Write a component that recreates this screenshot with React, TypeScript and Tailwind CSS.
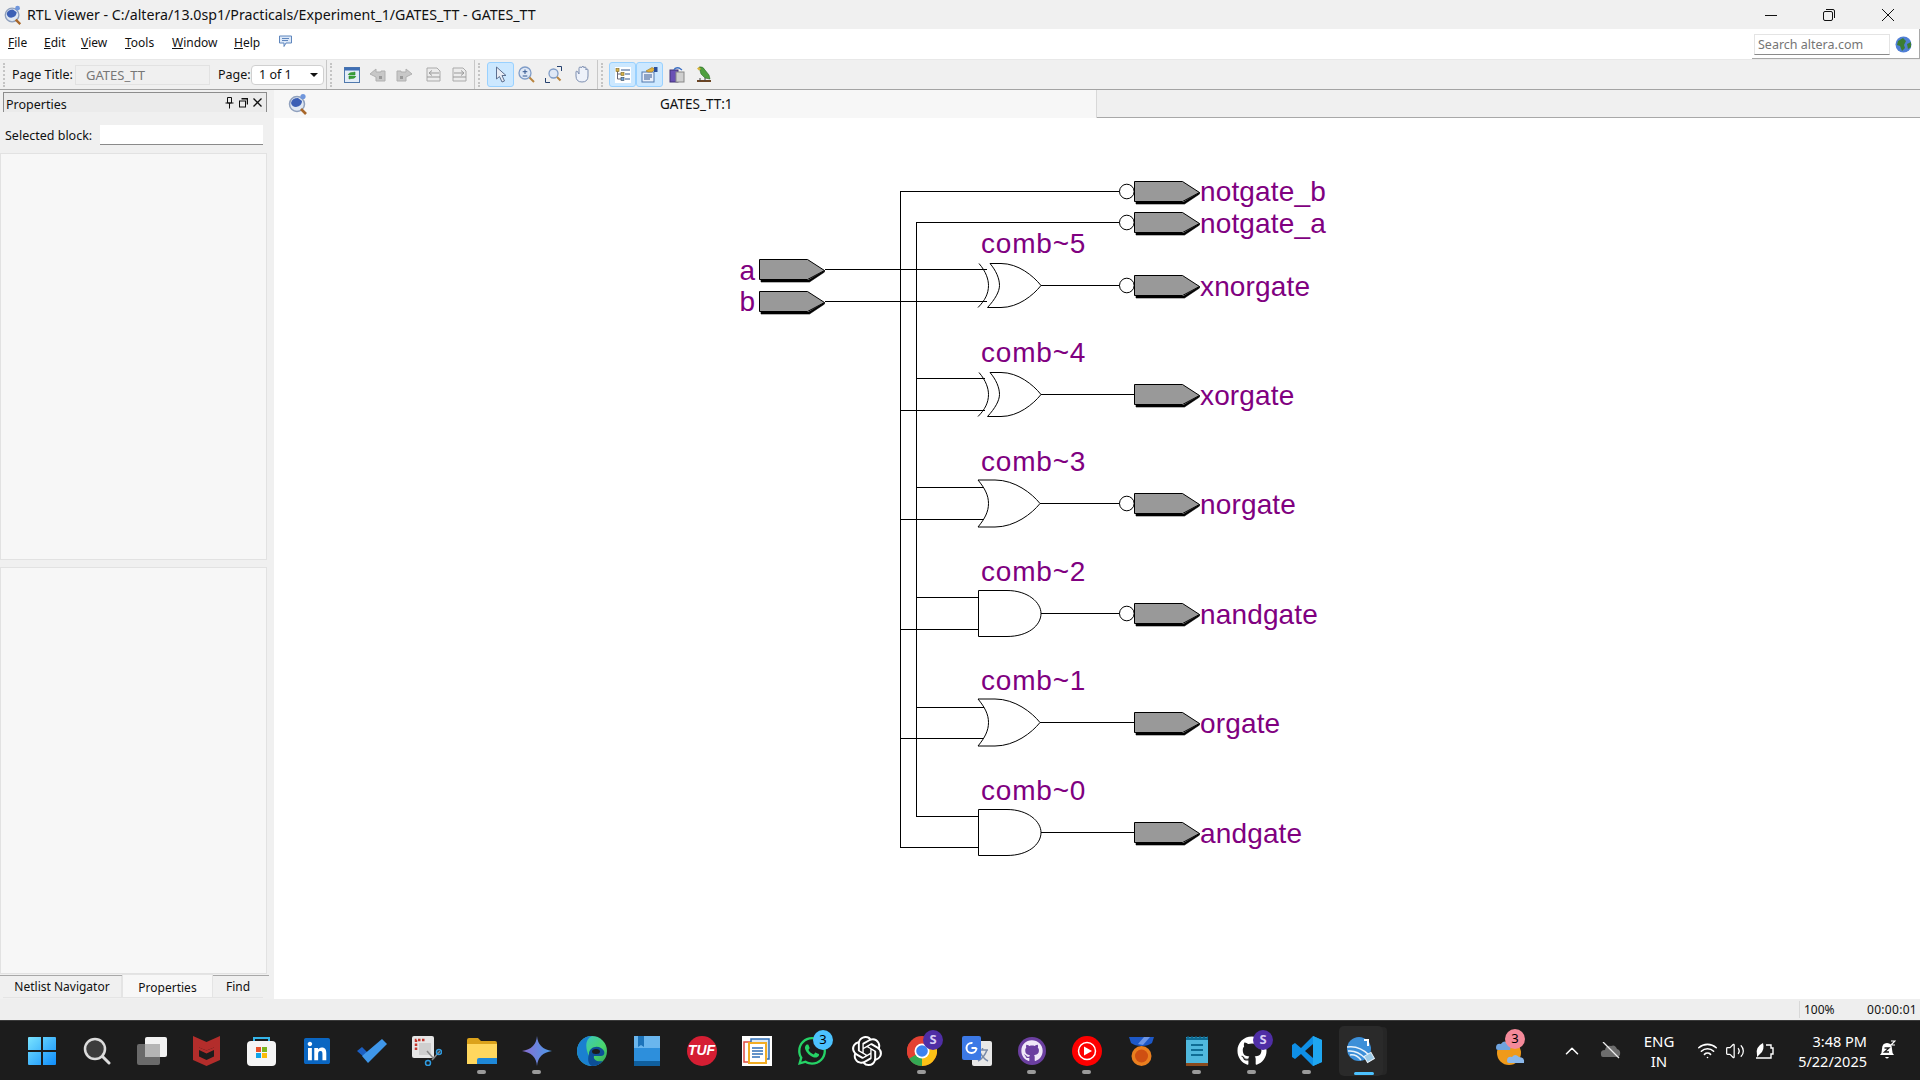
import type { ReactNode } from 'react';
import { FaGithub, FaLinkedin, FaWhatsapp } from 'react-icons/fa';
import { SiOpenai } from 'react-icons/si';
import { ChevronUp, Volume2, Wifi } from 'lucide-react';

function SphereLens({ size }: { size: number }) {
    return (
        <svg width={size} height={size} viewBox="0 0 22 22">
            <circle cx="10" cy="11" r="7.5" fill="#dfe7f2" stroke="#8fa0bd" strokeWidth="1.5" />
            <path d="M4 10 Q5 5 11 5 L15 8 Q15 13 9 14 Q5 14 4 10Z" fill="#3b5fb5" />
            <circle cx="16" cy="3.5" r="2.6" fill="#6f96dc" />
            <path d="M14 16 L19 21" stroke="#a8672a" strokeWidth="2.6" />
        </svg>
    );
}

function Grip() {
    return <div className="w-[3px] h-[24px] border-l-2 border-dotted border-[#c4c4c4]" />;
}

function Sep() {
    return <div className="w-px h-full bg-[#c8c8c8] ml-[2px]" />;
}

function ToolBtn({ className, children }: { className: string; children: ReactNode }) {
    return <div className={`h-[25px] flex items-center justify-center ${className}`}>{children}</div>;
}

function MenuItem({ first, rest, className }: { first: string; rest: string; className: string }) {
    return (
        <span className={className}>
            <span className="underline">{first}</span>
            {rest}
        </span>
    );
}

function TitleBar() {
    return (
        <div className="h-[29px] bg-[#f0f0f0] flex items-center relative shrink-0">
            <div className="ml-[3px] w-[24px]"><SphereLens size={20} /></div>
            <span className="text-[14.2px] text-[#111]">RTL Viewer - C:/altera/13.0sp1/Practicals/Experiment_1/GATES_TT - GATES_TT</span>
            <div className="ml-auto flex items-center">
                <svg width="12" height="12" viewBox="0 0 12 12" className="mr-[46px]"><path d="M0 6.5H12" stroke="#111" strokeWidth="1" /></svg>
                <svg width="12" height="12" viewBox="0 0 12 12" className="mr-[47px]"><rect x="0.5" y="2.5" width="9" height="9" rx="1.5" fill="none" stroke="#111" /><path d="M3 .5H10Q11.5 .5 11.5 2V9" fill="none" stroke="#111" /></svg>
                <svg width="12" height="12" viewBox="0 0 12 12" className="mr-[26px]"><path d="M0 0L12 12M12 0L0 12" stroke="#111" strokeWidth="1" /></svg>
            </div>
        </div>
    );
}

function MenuBar() {
    return (
        <div className="h-[31px] bg-white border-b border-[#e8e8e8] flex items-center text-[12px] text-[#111] relative shrink-0">
            <MenuItem first="F" rest="ile" className="ml-[8px] w-[36px] mb-[2px]" />
            <MenuItem first="E" rest="dit" className="w-[37px] mb-[2px]" />
            <MenuItem first="V" rest="iew" className="w-[44px] mb-[2px]" />
            <MenuItem first="T" rest="ools" className="w-[47px] mb-[2px]" />
            <MenuItem first="W" rest="indow" className="w-[62px] mb-[2px]" />
            <MenuItem first="H" rest="elp" className="w-[44px] mb-[2px]" />
            <svg width="15" height="13" viewBox="0 0 15 13" className="mb-[5px]">
                <path d="M1.5 1H13.5V8H8L6 11.5V8H1.5Z" fill="#dce8f8" stroke="#5f86bd" />
                <path d="M4 3.5H11M4 5.5H10" stroke="#5f86bd" />
            </svg>
            <div className="ml-auto h-[30px] w-[168px] border-b border-r border-[#a8a8a8] flex items-center pl-[2px] pt-[2px]">
                <div className="w-[136px] h-[21px] bg-white border border-[#e4e4e4] border-b-[#8a8a8a] pl-[3px] text-[12.5px] leading-[19px] text-[#757575]">Search altera.com</div>
                <svg width="17" height="17" viewBox="0 0 17 17" className="ml-[5px]">
                    <circle cx="8.5" cy="8.5" r="8" fill="#4f7fd6" />
                    <path d="M3 5 L8 2 L11 5 L9 9 L10 12 L7 15 L5 10 L2 9Z M12 8 L16 6 L16 11 L13 13Z" fill="#3c7d33" />
                </svg>
            </div>
        </div>
    );
}

function Toolbar() {
    return (
        <div className="h-[30px] bg-[#f0f0f0] border-b border-[#a3a3a3] flex items-center text-[12.5px] text-[#111] shrink-0">
            <div className="ml-[3px]"><Grip /></div>
            <span className="ml-[6px] w-[63px] mt-[2px]">Page Title:</span>
            <div className="w-[135px] h-[20px] border border-[#e2e2e2] pl-[10px] leading-[19px] text-[13px] text-[#777]">GATES_TT</div>
            <span className="ml-[8px] w-[33px] mt-[2px]">Page:</span>
            <div className="w-[73px] h-[20px] bg-white border border-[#d0d0d0] rounded-[4px] pl-[7px] pt-[1px] leading-[18px] flex items-center">
                1 of 1
                <svg width="8" height="4" viewBox="0 0 8 4" className="ml-auto mr-[5px]"><path d="M0 0H8L4 4Z" fill="#111" /></svg>
            </div>
            <Sep />
            <div className="ml-[3px]"><Grip /></div>
            <ToolBtn className="ml-[5px] w-[27px]">
                <svg width="16" height="16" viewBox="0 0 16 16">
                    <rect x=".5" y=".5" width="15" height="15" fill="#e4edf8" stroke="#5079ad" />
                    <rect x=".5" y=".5" width="15" height="3" fill="#3f6fb5" />
                    <path d="M4 8 Q5 5 9 5.5 L11 5 L11 8 L8 8 M12 9 Q11 12 7 11.5 L5 12 L5 9 L8 9" fill="#3aa03a" stroke="#2c8a2c" strokeWidth=".6" />
                </svg>
            </ToolBtn>
            <ToolBtn className="w-[26px]">
                <svg width="16" height="14" viewBox="0 0 16 14"><path d="M0 6L6 1V4H11V3L15 3V13H6V9L0 6Z" fill="#c8c8c8" stroke="#b0b0b0" /><rect x="9" y="8" width="3" height="3" fill="#999" /></svg>
            </ToolBtn>
            <ToolBtn className="w-[26px]">
                <svg width="16" height="14" viewBox="0 0 16 14"><path d="M16 6L10 1V4H5V3L1 3V13H10V9L16 6Z" fill="#c8c8c8" stroke="#b0b0b0" /><rect x="4" y="8" width="3" height="3" fill="#999" /></svg>
            </ToolBtn>
            <ToolBtn className="ml-[3px] w-[26px]">
                <svg width="15" height="15" viewBox="0 0 15 15"><path d="M1 1H11L14 4V14H1Z" fill="#ececec" stroke="#aaa" /><path d="M13 6H4M6 3.5L3 6L6 8.5M1 10H14" stroke="#999" fill="none" /></svg>
            </ToolBtn>
            <ToolBtn className="w-[26px]">
                <svg width="15" height="15" viewBox="0 0 15 15"><path d="M1 1H11L14 4V14H1Z" fill="#ececec" stroke="#aaa" /><path d="M2 6H11M9 3.5L12 6L9 8.5M1 10H14" stroke="#999" fill="none" /></svg>
            </ToolBtn>
            <Sep />
            <div className="ml-[3px]"><Grip /></div>
            <ToolBtn className="ml-[6px] w-[27px] bg-[#cce8ff] border border-[#99d1ff] rounded-[3px]">
                <svg width="12" height="17" viewBox="0 0 12 17"><path d="M1.5 1V13L4.5 10.5L7 16L9.5 15L7 9.5H11Z" fill="#e8ecf4" stroke="#5d6f8f" /></svg>
            </ToolBtn>
            <ToolBtn className="w-[25px]">
                <svg width="17" height="17" viewBox="0 0 17 17"><circle cx="7" cy="7" r="6" fill="#dfe8f6" stroke="#7f9cc7" strokeWidth="1.3" /><path d="M7 3.5V8M4.7 5.7H9.3M4.7 10H9.3" stroke="#33568f" /><path d="M11.5 11.5L16 16" stroke="#b9853f" strokeWidth="2" /></svg>
            </ToolBtn>
            <ToolBtn className="w-[29px]">
                <svg width="17" height="17" viewBox="0 0 17 17"><path d="M12 .5H16.5V5M.5 12V16.5H5" fill="none" stroke="#24406e" /><circle cx="8.5" cy="7.5" r="4.5" fill="#dfe8f6" stroke="#7f9cc7" strokeWidth="1.3" /><path d="M12 11L15.5 14.5" stroke="#b9853f" strokeWidth="2" /></svg>
            </ToolBtn>
            <ToolBtn className="w-[27px]">
                <svg width="17" height="17" viewBox="0 0 17 17"><path d="M3 6V10Q3 16 9 16Q15 16 15 10V4Q15 3 14 3Q13 3 13 4V2Q13 1 12 1Q11 1 11 2V1.5Q11 .5 10 .5Q8.5 .5 8.5 1.5V2Q8 1 7 1Q6 1 6 2.5V8L4.5 5.5Q3 4.5 3 6Z" fill="#eef2fa" stroke="#7d8eb0" /></svg>
            </ToolBtn>
            <Sep />
            <div className="ml-[3px]"><Grip /></div>
            <ToolBtn className="ml-[5px] w-[27px] bg-[#cce8ff] border border-[#99d1ff] rounded-[3px]">
                <svg width="16" height="16" viewBox="0 0 16 16"><rect width="16" height="16" fill="#fff" /><path d="M2.5 3V12H6M2.5 7H6" fill="none" stroke="#667" /><rect x="1" y="1.5" width="3" height="3" fill="#d9b24a" stroke="#7a6420" strokeWidth=".6" /><rect x="6" y="5.5" width="3" height="3" fill="#d9b24a" stroke="#7a6420" strokeWidth=".6" /><rect x="6" y="10.5" width="3" height="3" fill="#6ea0d8" stroke="#345" strokeWidth=".6" /><path d="M6 3H15M10 7H15M10 12H15" stroke="#33568f" /></svg>
            </ToolBtn>
            <ToolBtn className="w-[27px] bg-[#cce8ff] border border-[#99d1ff] rounded-[3px]">
                <svg width="17" height="17" viewBox="0 0 17 17"><rect x="1" y="6" width="12" height="10" fill="#eaf0fa" stroke="#5079ad" /><path d="M3 9H11M3 11H11M3 13H9" stroke="#33568f" /><path d="M5 5L11 1.5L14 3L11 6H7Z" fill="#e3b23c" stroke="#9a7420" strokeWidth=".6" /><rect x="13" y="1" width="3.5" height="5" fill="#2b4f99" /></svg>
            </ToolBtn>
            <ToolBtn className="w-[27px]">
                <svg width="16" height="16" viewBox="0 0 16 16"><rect x="1" y="3" width="8" height="12" fill="#6a50b5" stroke="#403077" /><rect x="7" y="5" width="8" height="10" fill="#cfcfcf" stroke="#888" /><path d="M5 3Q6 0 10 1L13 3" fill="none" stroke="#3c6fc2" strokeWidth="1.4" /></svg>
            </ToolBtn>
            <ToolBtn className="w-[27px]">
                <svg width="16" height="17" viewBox="0 0 16 17"><path d="M3 1Q7 0 9 4L13 9L14 13L9 12L5 8Z" fill="#4f9f3f" stroke="#2c6a25" strokeWidth=".6" /><path d="M1 2.5L3 1L5 3L3 4.5Z" fill="#d9b33a" /><path d="M1 15H15" stroke="#6b4524" strokeWidth="2" /><path d="M4 12V15M9 12V15" stroke="#444" /></svg>
            </ToolBtn>
        </div>
    );
}

function PanelIcons() {
    return (
        <div className="ml-auto flex items-center gap-[5px] mr-[4px] mb-[6px]">
            <svg width="9" height="12" viewBox="0 0 9 12"><path d="M2.5 .5H6.5V6H2.5ZM.5 6H8.5M4.5 6V11.5" fill="none" stroke="#111" /></svg>
            <svg width="9" height="10" viewBox="0 0 9 10"><rect x=".5" y="3" width="6" height="6" fill="none" stroke="#111" /><path d="M2.5 .8H8.5V6.5" fill="none" stroke="#111" strokeWidth="1.5" /></svg>
            <svg width="9" height="9" viewBox="0 0 9 9"><path d="M.5 .5L8.5 8.5M8.5 .5L.5 8.5" stroke="#111" strokeWidth="1.3" /></svg>
        </div>
    );
}

function LeftPanel() {
    return (
        <div className="w-[274px] h-full bg-[#f0f0f0] flex flex-col text-[12.5px] text-[#111] shrink-0">
            <div className="mt-[2px] ml-[3px] w-[264px] h-[20px] bg-[#ebebeb] border border-b-0 border-[#8c8c8c] flex items-center pl-[2px] pt-[6px]">
                Properties
                <PanelIcons />
            </div>
            <div className="mt-[13px] h-[20px] flex items-center pl-[5px]">
                <span className="w-[95px] mt-[2px]">Selected block:</span>
                <div className="w-[163px] h-[20px] bg-white border-b border-[#8a8a8a]" />
            </div>
            <div className="mt-[8px] w-[267px] h-[407px] bg-[#f7f7f7] border border-[#e2e2e2]" />
            <div className="mt-[7px] w-[267px] h-[407px] bg-[#f7f7f7] border border-[#e2e2e2]" />
            <div className="relative h-[25px] w-[269px] flex items-start pl-[3px] text-[12px]">
                <div className="absolute left-0 top-[1px] w-[269px] h-px bg-[#a8a8a8]" />
                <div className="w-[119px] h-[22px] mt-[2px] bg-[#f0f0f0] border-r border-b border-[#e4e4e4] text-center leading-[21px]">Netlist Navigator</div>
                <div className="relative w-[91px] h-[24px] bg-[#f7f7f7] border border-[#e4e4e4] text-center leading-[25px]">Properties</div>
                <div className="w-[50px] h-[22px] mt-[2px] bg-[#f0f0f0] border-b border-[#e4e4e4] text-center leading-[21px]">Find</div>
            </div>
        </div>
    );
}

function Port({ x, y }: { x: number; y: number }) {
    return (
        <g>
            <path d={`M${x + 1.5} ${y + 10.5}H${x + 49}L${x + 65} ${y + 1}V${y + 2.5}L${x + 50} ${y + 12.5}H${x + 1.5}Z`} fill="#000" stroke="#000" strokeWidth=".6" />
            <path d={`M${x} ${y - 10}H${x + 48}L${x + 65} ${y + 1}L${x + 48} ${y + 10}H${x}Z`} fill="#999" stroke="#000" strokeWidth="1" />
        </g>
    );
}

function Bubble({ y }: { y: number }) {
    return <circle cx="1126.8" cy={y} r="7.3" fill="#fff" stroke="#000" strokeWidth="1" />;
}

function AndGate({ c }: { c: number }) {
    return <path d={`M978.5 ${c - 23}H1007C1028 ${c - 23} 1041 ${c - 11} 1041 ${c}C1041 ${c + 12} 1028 ${c + 23} 1007 ${c + 23}H978.5Z`} fill="#fff" stroke="#000" />;
}

function OrGate({ c }: { c: number }) {
    return <path d={`M978 ${c - 23.5}H995C1015 ${c - 23.5} 1032 ${c - 10} 1040 ${c}C1032 ${c + 10} 1015 ${c + 23.5} 995 ${c + 23.5}H978C985 ${c + 15} 988.5 ${c + 8} 988.5 ${c}C988.5 ${c - 8} 985 ${c - 15} 978 ${c - 23.5}Z`} fill="#fff" stroke="#000" />;
}

function XorGate({ c }: { c: number }) {
    return (
        <g fill="none" stroke="#000">
            <path d={`M979 ${c - 22}C986 ${c - 14} 988.5 ${c - 6} 988.5 ${c}C988.5 ${c + 8} 985 ${c + 15} 978 ${c + 22}`} />
            <path d={`M990 ${c - 22}H1001C1018 ${c - 22} 1033 ${c - 10} 1041 ${c}C1033 ${c + 10} 1018 ${c + 22} 1001 ${c + 22}H987.5C995 ${c + 14} 999.5 ${c + 6} 999.5 ${c}C999.5 ${c - 7} 996 ${c - 15} 990 ${c - 22}Z`} fill="#fff" />
        </g>
    );
}

const labelClass = "font-['Liberation_Sans',sans-serif] text-[28px] fill-[#800080]";

const rows = [
    { c: 285.5, kind: 'xor', label: 'comb~5', out: 'xnorgate', inv: true, i1: 269.5, i2: 301.5 },
    { c: 394.5, kind: 'xor', label: 'comb~4', out: 'xorgate', inv: false, i1: 378.5, i2: 410.5 },
    { c: 503.5, kind: 'or', label: 'comb~3', out: 'norgate', inv: true, i1: 487.5, i2: 519.5 },
    { c: 613.5, kind: 'and', label: 'comb~2', out: 'nandgate', inv: true, i1: 597.5, i2: 629.5 },
    { c: 722.5, kind: 'or', label: 'comb~1', out: 'orgate', inv: false, i1: 707.5, i2: 738.5 },
    { c: 832.5, kind: 'and', label: 'comb~0', out: 'andgate', inv: false, i1: 816.5, i2: 847.5 },
];

function Schematic() {
    return (
        <svg width="1646" height="881" viewBox="274 118 1646 881" className="block">
            <g stroke="#000" strokeWidth="1" shapeRendering="crispEdges" fill="none">
                <path d="M1120 191.5H900.5V847.5H978" />
                <path d="M1120 222.5H916.5V816.5H978" />
                <path d="M825 269.5H987M825 301.5H987" />
                {rows.slice(1, 5).map((r) => (
                    <path key={r.label} d={`M916.5 ${r.i1}H985M900.5 ${r.i2}H985`} />
                ))}
                {rows.map((r) => (
                    <path key={r.out} d={`M1040 ${r.c}H1134`} />
                ))}
            </g>
            {rows.map((r) => (
                <g key={r.label}>
                    {r.kind === 'xor' && <XorGate c={r.c} />}
                    {r.kind === 'or' && <OrGate c={r.c} />}
                    {r.kind === 'and' && <AndGate c={r.c} />}
                    {r.inv && <Bubble y={r.c} />}
                    <Port x={1134.5} y={r.c} />
                    <text x="981" y={r.c - 33} letterSpacing=".8" className={labelClass}>{r.label}</text>
                    <text x="1200" y={r.c + 10.5} letterSpacing=".15" className={labelClass}>{r.out}</text>
                </g>
            ))}
            <Bubble y={191.5} />
            <Bubble y={222.5} />
            <Port x={1134.5} y={191.5} />
            <Port x={1134.5} y={222.5} />
            <text x="1200" y="201" letterSpacing=".15" className={labelClass}>notgate_b</text>
            <text x="1200" y="233" letterSpacing=".15" className={labelClass}>notgate_a</text>
            <Port x={759.5} y={269.5} />
            <Port x={759.5} y={301.5} />
            <text x="755" y="280" textAnchor="end" className={labelClass}>a</text>
            <text x="755" y="311" textAnchor="end" className={labelClass}>b</text>
        </svg>
    );
}

function Workspace() {
    return (
        <div className="flex-1 h-full flex flex-col min-w-0">
            <div className="h-[28px] flex bg-[#f0f0f0] border-b border-[#a8a8a8] shrink-0">
                <div className="w-[823px] h-[28px] bg-[#f7f7f7] border-r border-[#d8d8d8] relative flex items-center text-[13.5px] text-[#111]">
                    <div className="ml-[13px]"><SphereLens size={22} /></div>
                    <span className="ml-[351px] mt-[1px]">GATES_TT:1</span>
                </div>
            </div>
            <div className="flex-1 bg-white overflow-hidden">
                <Schematic />
            </div>
        </div>
    );
}

function StatusBar() {
    return (
        <div className="h-[21px] bg-[#eeeeee] flex items-center text-[12px] text-[#111] shrink-0">
            <div className="ml-[1799px] w-px h-[17px] bg-[#d8d8d8]" />
            <span className="ml-[4px] w-[63px]">100%</span>
            <span className="tracking-[.3px]">00:00:01</span>
        </div>
    );
}

function TaskIcon({ children, dot, badge, badgeClass }: { children: ReactNode; dot?: boolean; badge?: string; badgeClass?: string }) {
    return (
        <div className="relative w-[55px] h-full flex items-center justify-center shrink-0">
            {children}
            {badge && (
                <div className={`absolute left-[29px] top-[9px] w-[20px] h-[20px] rounded-full flex items-center justify-center text-[13px] ${badgeClass}`}>{badge}</div>
            )}
            {dot && <div className="absolute left-[23px] bottom-[6px] w-[9px] h-[4px] rounded-full bg-[#9a9a9a]" />}
        </div>
    );
}

function Taskbar() {
    return (
        <div className="h-[60px] bg-[#1c1c1c] border-t border-[#3a3a3a] flex items-center pl-[14px] text-white shrink-0">
            <TaskIcon>
                <svg width="30" height="30" viewBox="0 0 30 30">
                    <defs><linearGradient id="win" x1="0" y1="0" x2="1" y2="1"><stop offset="0" stopColor="#7ae4ff" /><stop offset="1" stopColor="#0f8dfb" /></linearGradient></defs>
                    <path d="M1 2Q1 1 2 1H14V14H1ZM16 1H28Q29 1 29 2V14H16ZM1 16H14V29H2Q1 29 1 28ZM16 16H29V28Q29 29 28 29H16Z" fill="url(#win)" />
                </svg>
            </TaskIcon>
            <TaskIcon>
                <svg width="28" height="28" viewBox="0 0 28 28"><circle cx="12" cy="12" r="10" fill="#3c3c3c" stroke="#dcdcdc" strokeWidth="2.5" /><path d="M19.5 19.5L26 26" stroke="#dcdcdc" strokeWidth="3" strokeLinecap="round" /></svg>
            </TaskIcon>
            <TaskIcon>
                <svg width="30" height="28" viewBox="0 0 30 28"><rect x="0" y="7" width="23" height="21" rx="2" fill="#6a6a6a" /><rect x="8" y="0" width="22" height="20" rx="2" fill="#f2f2f2" /><rect x="8" y="7" width="15" height="13" fill="#b5b5b5" /></svg>
            </TaskIcon>
            <TaskIcon>
                <svg width="27" height="30" viewBox="0 0 27 30"><path d="M0 0L13.5 6L27 0V24L13.5 30L0 24Z" fill="#b32d2b" /><path d="M6 11.5L13.5 14.5L21 11.5V20.5L13.5 24L6 20.5Z" fill="#1c1c1c" /><path d="M6 11.5V14L13.5 17.5L21 14V11.5L13.5 14.5Z" fill="#b32d2b" /></svg>
            </TaskIcon>
            <TaskIcon>
                <svg width="29" height="30" viewBox="0 0 29 30"><path d="M7 6V2H22V6" fill="none" stroke="#34b4e8" strokeWidth="2" /><rect x="0" y="5" width="29" height="25" rx="4" fill="#f5f5f5" /><rect x="9" y="11" width="5" height="5" fill="#e8512a" /><rect x="15" y="11" width="5" height="5" fill="#7ab51d" /><rect x="9" y="17" width="5" height="5" fill="#0ea5e9" /><rect x="15" y="17" width="5" height="5" fill="#fbbc09" /></svg>
            </TaskIcon>
            <TaskIcon>
                <div className="relative w-[26px] h-[26px] flex items-center justify-center">
                    <div className="absolute w-[20px] h-[20px] bg-white" />
                    <FaLinkedin className="relative text-[#0a66c2] text-[30px]" />
                </div>
            </TaskIcon>
            <TaskIcon>
                <svg width="30" height="24" viewBox="0 0 30 24"><path d="M0 12L5 8L11 14L8 19Z" fill="#1b5fc2" /><path d="M5 17L25 0L30 5L11 24Z" fill="#3f97ea" /></svg>
            </TaskIcon>
            <TaskIcon>
                <svg width="30" height="30" viewBox="0 0 30 30"><rect x="0" y="0" width="22" height="22" rx="2" fill="#e6e6e6" /><path d="M4 14V4H14" fill="none" stroke="#c5352b" strokeWidth="2.5" strokeDasharray="2.5 1.5" /><rect x="7" y="7" width="12" height="12" fill="#cfcfcf" /><path d="M15 15L22 23M28 15L20 24" stroke="#888" strokeWidth="1.5" /><circle cx="27" cy="16" r="2.5" fill="none" stroke="#2f9be0" strokeWidth="1.5" /><circle cx="16" cy="27" r="2.5" fill="none" stroke="#2f9be0" strokeWidth="1.5" /></svg>
            </TaskIcon>
            <TaskIcon dot>
                <svg width="30" height="28" viewBox="0 0 30 28"><path d="M0 3Q0 1 2 1H11L14 4H28Q30 4 30 6V27H0Z" fill="#dba21b" /><rect x="0" y="7" width="30" height="20" fill="#ffd75e" /><path d="M10 27V23Q10 21 12 21H30V27Z" fill="#1e88d8" /></svg>
            </TaskIcon>
            <TaskIcon dot>
                <svg width="30" height="30" viewBox="0 0 30 30">
                    <defs><linearGradient id="gem" x1="0" y1="0" x2="1" y2="0"><stop offset="0" stopColor="#8a6cd1" /><stop offset="1" stopColor="#4b9be8" /></linearGradient></defs>
                    <path d="M15 0Q16 13 30 15Q16 17 15 30Q14 17 0 15Q14 13 15 0Z" fill="url(#gem)" />
                </svg>
            </TaskIcon>
            <TaskIcon>
                <svg width="30" height="30" viewBox="0 0 30 30">
                    <defs><linearGradient id="edge" x1="0" y1="0" x2="1" y2="1"><stop offset="0" stopColor="#36c3d8" /><stop offset=".6" stopColor="#4ad66d" /><stop offset="1" stopColor="#2e9c5a" /></linearGradient></defs>
                    <circle cx="15" cy="15" r="15" fill="url(#edge)" />
                    <path d="M0 15A15 15 0 0 1 15 0C8 3 8 12 12 20C14 25 20 29 24 27A15 15 0 0 1 0 15Z" fill="#1a80d0" />
                    <path d="M12 18C12 12 19 9 24 12C29 15 28 20 24 20H17C16 24 20 26 26 25A15 15 0 0 1 15 30C10 28 11 21 12 18Z" fill="#0d4f97" />
                    <ellipse cx="19" cy="15.5" rx="4" ry="2.5" fill="#1c1c1c" />
                </svg>
            </TaskIcon>
            <TaskIcon>
                <svg width="26" height="30" viewBox="0 0 26 30"><rect x="0" y="0" width="26" height="30" rx="1" fill="#2d8fdc" /><rect x="0" y="0" width="26" height="12" fill="#6ab6ee" /><rect x="0" y="25" width="26" height="5" fill="#0f5f9e" /><path d="M4 0H10V11L7 9L4 11Z" fill="#1c73ba" /></svg>
            </TaskIcon>
            <TaskIcon>
                <div className="w-[30px] h-[30px] rounded-full bg-[#d51e33] flex items-center justify-center text-[14px] font-bold italic text-white font-['Liberation_Sans',sans-serif]">TUF</div>
            </TaskIcon>
            <TaskIcon>
                <svg width="30" height="30" viewBox="0 0 30 30"><rect width="30" height="30" fill="#fff" /><rect x="2" y="6" width="16" height="20" fill="#fff" stroke="#e04b43" strokeWidth="1.5" /><rect x="9" y="3" width="18" height="20" fill="#dbe7f5" stroke="#2f6fb8" strokeWidth="1.5" /><rect x="7" y="7" width="17" height="20" fill="#fff" stroke="#f2ad24" strokeWidth="2" /><path d="M10 12H21M10 15H21M10 18H21M10 21H18" stroke="#2f6fb8" strokeWidth="1.5" /></svg>
            </TaskIcon>
            <TaskIcon badge="3" badgeClass="bg-[#4cc2ff] text-black">
                <FaWhatsapp className="text-[#25d366] text-[32px]" />
            </TaskIcon>
            <TaskIcon>
                <SiOpenai className="text-white text-[30px]" />
            </TaskIcon>
            <TaskIcon dot badge="S" badgeClass="bg-[#4f2ea5] text-[#d8cdf5] font-bold">
                <svg width="30" height="30" viewBox="0 0 30 30">
                    <circle cx="15" cy="15" r="15" fill="#e34133" />
                    <path d="M15 15L2 22.5A15 15 0 0 0 15 30Z" fill="#34a853" />
                    <path d="M15 15L15 30A15 15 0 0 0 28 7.5Z" fill="#fbc116" />
                    <path d="M15 15L2 22.5A15 15 0 0 1 2 7.5Z" fill="#e34133" />
                    <circle cx="15" cy="15" r="7.5" fill="#fff" />
                    <circle cx="15" cy="15" r="5.8" fill="#3b82f0" />
                </svg>
            </TaskIcon>
            <TaskIcon>
                <svg width="30" height="30" viewBox="0 0 30 30"><rect x="10" y="5" width="20" height="25" rx="2" fill="#e8e8e8" /><path d="M15 14H26M20.5 14V12M17 14Q20 22 26 25M25 14Q22 22 16 25" stroke="#7a8ba8" strokeWidth="1.5" fill="none" /><rect x="0" y="0" width="19" height="24" rx="2" fill="#3c79e6" /><circle cx="9.5" cy="12" r="5" fill="none" stroke="#fff" strokeWidth="2" strokeDasharray="24 7" /><path d="M9.5 12H14.5" stroke="#fff" strokeWidth="2" /></svg>
            </TaskIcon>
            <TaskIcon dot>
                <div className="w-[28px] h-[28px] rounded-full bg-[#6b3fa0] flex items-center justify-center">
                    <FaGithub className="text-[#f0e8f8] text-[22px]" />
                </div>
            </TaskIcon>
            <TaskIcon dot>
                <svg width="30" height="30" viewBox="0 0 30 30"><circle cx="15" cy="15" r="15" fill="#fe0000" /><circle cx="15" cy="15" r="8.5" fill="none" stroke="#fff" strokeWidth="1.5" /><path d="M12 10.5L20 15L12 19.5Z" fill="#fff" /></svg>
            </TaskIcon>
            <TaskIcon>
                <svg width="27" height="30" viewBox="0 0 27 30"><path d="M1 1H26L24 7Q20 10 13.5 10Q7 10 3 7Z" fill="#1d58c7" /><path d="M10 8L16 1H22L15 9Z" fill="#6c95e6" /><circle cx="13.5" cy="20" r="10" fill="#ea7f1f" /><circle cx="13.5" cy="20" r="6.5" fill="#cf4f12" /></svg>
            </TaskIcon>
            <TaskIcon dot>
                <svg width="22" height="30" viewBox="0 0 22 30"><rect x="0" y="1" width="22" height="28" fill="#50b8dd" /><path d="M0 2L2 0L4 2L6 0L8 2L10 0L12 2L14 0L16 2L18 0L20 2L22 0V4H0Z" fill="#0f6d95" /><path d="M5 9H17M5 14H17M5 19H17" stroke="#0f6d95" strokeWidth="2" /><rect x="0" y="27" width="22" height="3" fill="#8a4a1e" /></svg>
            </TaskIcon>
            <TaskIcon dot badge="S" badgeClass="bg-[#4f2ea5] text-[#d8cdf5] font-bold">
                <FaGithub className="text-white text-[30px]" />
            </TaskIcon>
            <TaskIcon dot>
                <svg width="30" height="30" viewBox="0 0 30 30"><path d="M21 0L30 4V26L21 30L9 18L3 23L0 21V9L3 7L9 12ZM21 8L13 15L21 22Z" fill="#0f8fe6" /><path d="M21 0L30 4V26L21 30Z" fill="#1fa7f1" /></svg>
            </TaskIcon>
            <div className="relative w-[44px] h-[50px] ml-[5px] bg-[#2a2a2a] rounded-[5px] flex items-center justify-center shadow-[5px_0_0_-1px_#262626]">
                <svg width="28" height="28" viewBox="0 0 28 28">
                    <circle cx="12" cy="12" r="12" fill="#3c8fd8" />
                    <path d="M0 10Q12 8 22 18M1 14Q10 13 18 21M3 18Q9 17 14 23" fill="none" stroke="#e8f2fb" strokeWidth="1.5" />
                    <path d="M17 3L21 3L21 9" stroke="#fff" strokeWidth="2" fill="none" />
                    <rect x="18" y="17" width="8" height="7" fill="#9ccbe8" stroke="#e8f2fb" transform="rotate(-30 22 20)" />
                </svg>
                <div className="absolute left-[15px] bottom-[1px] w-[20px] h-[3px] rounded-full bg-[#4cc2ff]" />
            </div>
            <div className="relative ml-[113px] w-[30px] h-[30px]">
                <svg width="30" height="28" viewBox="0 0 30 28" className="absolute left-0 top-[2px]">
                    <circle cx="13" cy="15" r="12" fill="#ef9a1a" />
                    <path d="M0 10Q0 5 5 6Q8 1 12 6Q16 6 14 12H2Q0 12 0 10Z" fill="#6fa4df" />
                    <path d="M11 23Q11 18 16 19Q19 15 23 19Q29 19 28 25H13Q11 25 11 23Z" fill="#8bb8ea" />
                </svg>
                <div className="absolute left-[9px] -top-[7px] w-[20px] h-[20px] rounded-full bg-[#f48a9a] text-black text-[13px] flex items-center justify-center">3</div>
            </div>
            <ChevronUp className="ml-[35px] text-white" size={22} strokeWidth={1.7} />
            <svg width="21" height="17" viewBox="0 0 21 17" className="ml-[17px]">
                <path d="M1 13Q0 8 5 8Q6 3 11 4Q15 2 17 7Q21 8 20 13Q19 15 17 15H3Q1 15 1 13Z" fill="#6e6e6e" />
                <path d="M3 0L19 16" stroke="#eeeeee" strokeWidth="1.3" />
            </svg>
            <div className="ml-[18px] w-[40px] text-[15px] leading-[20px] text-center">
                <div>ENG</div>
                <div>IN</div>
            </div>
            <Wifi className="ml-[18px]" size={21} strokeWidth={1.8} />
            <Volume2 className="ml-[7px]" size={20} strokeWidth={1.5} />
            <svg width="22" height="18" viewBox="0 0 22 18" className="ml-[9px]">
                <path d="M2 16H17V12H19V6H17V3H12" fill="none" stroke="#fff" strokeWidth="1.4" />
                <path d="M3 13Q1 5 9 1Q11 8 6 12L3 15" fill="#fff" />
            </svg>
            <div className="ml-[10px] w-[81px] text-right text-[14.5px] leading-[20px]">
                <div>3:48 PM</div>
                <div>5/22/2025</div>
            </div>
            <svg width="17" height="21" viewBox="0 0 17 21" className="ml-[12px]">
                <path d="M1 15Q3 13 3 9Q3 3 8 3Q13 3 13 9Q13 13 15 15Z" fill="#fff" />
                <path d="M6 17Q8 20 10 17Z" fill="#fff" />
                <path d="M5.5 8H10L5.5 12H10" stroke="#1c1c1c" strokeWidth="1.3" fill="none" />
                <path d="M12 1H16L12 5H16" stroke="#fff" strokeWidth="1.2" fill="none" />
            </svg>
        </div>
    );
}

export default function App() {
    return (
        <div className="w-[1920px] h-[1080px] flex flex-col overflow-hidden font-['Noto_Sans',sans-serif]">
            <TitleBar />
            <MenuBar />
            <Toolbar />
            <div className="h-[909px] flex shrink-0">
                <LeftPanel />
                <Workspace />
            </div>
            <StatusBar />
            <Taskbar />
        </div>
    );
}
